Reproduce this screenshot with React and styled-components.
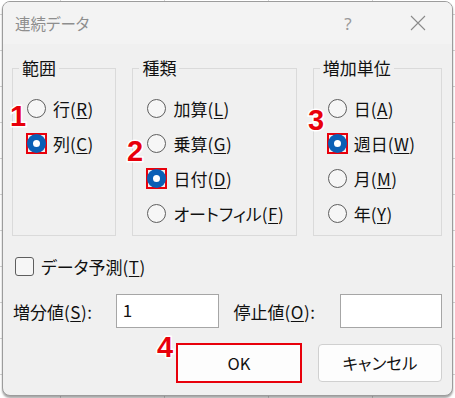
import React from "react";
import styled, { createGlobalStyle } from "styled-components";

const GlobalStyle = createGlobalStyle`
  html, body {
    margin: 0;
    height: 100%;
  }
  body {
    background-color: #ffffff;
    background-image:
      linear-gradient(to right, #d4d4d4 1px, transparent 1px),
      linear-gradient(to bottom, #d4d4d4 1px, transparent 1px);
    background-size: 104px 100%, 100% 36px;
    background-position: 60px 0, 0 14px;
    font-family: "Noto Sans CJK JP", "Noto Sans", sans-serif;
    font-feature-settings: "palt";
    color: #111;
  }
  #root {
    padding: 1px 0 0 2px;
  }
`;

const Dialog = styled.div`
  position: relative;
  box-sizing: border-box;
  width: 451px;
  height: 395px;
  border: 1px solid #9c9c9c;
  border-radius: 8px;
  overflow: hidden;
  background: #f0f0f0;
  box-shadow: 0 2px 2px rgba(0, 0, 0, 0.35);
  display: flex;
  flex-direction: column;
`;

const TitleBar = styled.div`
  height: 42px;
  flex: none;
  display: flex;
  align-items: center;
  padding: 0 11px 0 12px;
  background: #f3f3f3;
`;

const Title = styled.div`
  flex: 1;
  font-size: 15.5px;
  color: #8e8e8e;
`;

const Help = styled.div`
  width: 46px;
  margin-right: 24px;
  text-align: center;
  font-family: "Noto Sans", sans-serif;
  font-size: 17px;
  color: #9a9a9a;
`;

const Close = styled.div`
  width: 46px;
  height: 42px;
  display: flex;
  align-items: center;
  justify-content: center;
`;

const Body = styled.div`
  flex: 1;
  padding: 14px 10px 0 9px;
`;

const Groups = styled.div`
  display: flex;
  gap: 16px;
`;

const Group = styled.fieldset`
  box-sizing: border-box;
  width: ${(p) => p.$w}px;
  height: 178px;
  margin: 0;
  padding: 0 0 0 6px;
  border: 1px solid #dadada;
  min-inline-size: 0;
`;

const Legend = styled.legend`
  padding: 0 3px;
  font-size: 17px;
  line-height: 20px;
`;

const List = styled.div`
  padding: 13px 0 0 7px;
`;

const Row = styled.label`
  height: 35px;
  display: flex;
  align-items: center;
  gap: 6px;
  font-size: 17px;
  white-space: nowrap;
`;

const Mark = styled.span`
  box-sizing: border-box;
  width: 21px;
  height: 21px;
  display: flex;
  align-items: center;
  justify-content: center;
  border: 2px solid ${(p) => (p.$marked ? "#e8000b" : "transparent")};
`;

const Dot = styled.span`
  box-sizing: border-box;
  width: 19px;
  height: 19px;
  flex: none;
  border-radius: 50%;
  border: ${(p) => (p.$checked ? "6px solid #0a5fb5" : "1px solid #5e5e5e")};
  background: ${(p) => (p.$checked ? "#ffffff" : "#f6f6f6")};
`;

const U = styled.span`
  text-decoration: underline;
  text-underline-offset: 2px;
  text-decoration-thickness: 1px;
`;

const Paren = styled.span`
  letter-spacing: 0.5px;
`;

const CheckRow = styled.label`
  margin-top: 15px;
  height: 30px;
  display: flex;
  align-items: center;
  gap: 7px;
  padding-left: 3px;
  font-size: 17px;
`;

const Box = styled.span`
  box-sizing: border-box;
  width: 19px;
  height: 19px;
  border: 1px solid #5e5e5e;
  border-radius: 3px;
  background: #f6f6f6;
`;

const FieldRow = styled.div`
  margin-top: 13px;
  height: 34px;
  display: flex;
  align-items: center;
`;

const FieldLabel = styled.span`
  box-sizing: border-box;
  width: ${(p) => p.$w}px;
  padding-left: ${(p) => p.$pad}px;
  font-size: 17px;
  white-space: nowrap;
`;

const Input = styled.div`
  box-sizing: border-box;
  width: ${(p) => p.$w}px;
  height: 34px;
  border: 1px solid #a6a6a6;
  background: #ffffff;
  padding: 3px 0 0 6px;
  font-size: 17px;
  line-height: 24px;
`;

const ButtonRow = styled.div`
  margin-top: 15px;
  display: flex;
  justify-content: flex-end;
  align-items: center;
  gap: 16px;
`;

const Button = styled.button`
  box-sizing: border-box;
  width: ${(p) => (p.$marked ? 126 : 124)}px;
  height: ${(p) => (p.$marked ? 40 : 38)}px;
  border: ${(p) => (p.$marked ? "2px solid #e8000b" : "1px solid #d0d0d0")};
  border-radius: ${(p) => (p.$marked ? 0 : 4)}px;
  background: #fdfdfd;
  font-family: "Noto Sans CJK JP", "Noto Sans", sans-serif;
  font-feature-settings: "palt";
  font-size: 16.5px;
  color: #111;
  padding: 0;
`;

const Badge = styled.span`
  position: absolute;
  left: ${(p) => p.$x}px;
  top: ${(p) => p.$y}px;
  font-family: "Liberation Sans", Arial, sans-serif;
  font-weight: bold;
  font-size: 29px;
  line-height: 1;
  color: #e8000b;
  paint-order: stroke fill;
  -webkit-text-stroke: 3px #ffffff;
`;

const Radio = ({ checked, marked, children }) => (
  <Row>
    <Mark $marked={marked}>
      <Dot $checked={checked} />
    </Mark>
    <span>{children}</span>
  </Row>
);

const Key = ({ k }) => (
  <Paren>
    (<U>{k}</U>)
  </Paren>
);

const CloseIcon = () => (
  <svg width="16" height="16" viewBox="0 0 16 16">
    <path d="M1 1 L15 15 M15 1 L1 15" stroke="#8a8a8a" strokeWidth="1.1" />
  </svg>
);

export default function App() {
  return (
    <>
      <GlobalStyle />
      <Dialog>
        <TitleBar>
          <Title>連続データ</Title>
          <Help>?</Help>
          <Close>
            <CloseIcon />
          </Close>
        </TitleBar>
        <Body>
          <Groups>
            <Group $w={105}>
              <Legend>範囲</Legend>
              <List>
                <Radio>行<Key k="R" /></Radio>
                <Radio checked marked>列<Key k="C" /></Radio>
              </List>
            </Group>
            <Group $w={165}>
              <Legend>種類</Legend>
              <List>
                <Radio>加算<Key k="L" /></Radio>
                <Radio>乗算<Key k="G" /></Radio>
                <Radio checked marked>日付<Key k="D" /></Radio>
                <Radio>オートフィル<Key k="F" /></Radio>
              </List>
            </Group>
            <Group $w={130}>
              <Legend>増加単位</Legend>
              <List>
                <Radio>日<Key k="A" /></Radio>
                <Radio checked marked>週日<Key k="W" /></Radio>
                <Radio>月<Key k="M" /></Radio>
                <Radio>年<Key k="Y" /></Radio>
              </List>
            </Group>
          </Groups>
          <CheckRow>
            <Box />
            <span>データ予測<Key k="T" /></span>
          </CheckRow>
          <FieldRow>
            <FieldLabel $w={104} $pad={1}>増分値<Key k="S" />:</FieldLabel>
            <Input $w={103}>1</Input>
            <FieldLabel $w={122} $pad={15}>停止値<Key k="O" />:</FieldLabel>
            <Input $w={102} />
          </FieldRow>
          <ButtonRow>
            <Button $marked>OK</Button>
            <Button>キャンセル</Button>
          </ButtonRow>
        </Body>
        <Badge $x={7} $y={100}>1</Badge>
        <Badge $x={124} $y={135}>2</Badge>
        <Badge $x={305} $y={104}>3</Badge>
        <Badge $x={154} $y={331}>4</Badge>
      </Dialog>
    </>
  );
}
